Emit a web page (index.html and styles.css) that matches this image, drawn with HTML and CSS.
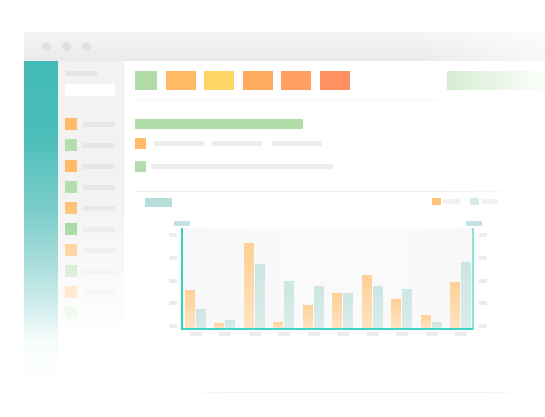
FILE: index.html
```html
<!DOCTYPE html>
<html lang="en">
<head>
<meta charset="utf-8">
<title>Dashboard</title>
<link rel="stylesheet" href="styles.css">
</head>
<body>
<div class="scene">
  <div class="window">
    <div class="titlebar">
      <span class="dot"></span><span class="dot"></span><span class="dot"></span>
    </div>
    <div class="body">
      <div class="nav"></div>
      <div class="sub">
        <div class="sub-label"></div>
        <div class="sub-input"></div>
        <ul class="menu">
          <li class="item"><span class="sq c-or"></span><span class="line"></span></li>
          <li class="item"><span class="sq c-gr"></span><span class="line"></span></li>
          <li class="item"><span class="sq c-or"></span><span class="line"></span></li>
          <li class="item"><span class="sq c-gr"></span><span class="line"></span></li>
          <li class="item"><span class="sq c-or"></span><span class="line"></span></li>
          <li class="item"><span class="sq c-dg"></span><span class="line"></span></li>
          <li class="item"><span class="sq c-or"></span><span class="line"></span></li>
          <li class="item"><span class="sq c-gr"></span><span class="line"></span></li>
          <li class="item"><span class="sq c-or"></span><span class="line"></span></li>
          <li class="item"><span class="sq c-gr"></span><span class="line"></span></li>
        </ul>
      </div>
      <div class="main">
        <div class="toolbar">
          <span class="tile t-green"></span>
          <span class="tile t-orange"></span>
          <span class="tile t-yellow"></span>
          <span class="tile t-orange2"></span>
          <span class="tile t-orange3"></span>
          <span class="tile t-orange4"></span>
          <span class="search"></span>
        </div>
        <div class="rule rule-top"></div>
        <div class="headline"></div>
        <div class="row row-a">
          <span class="sq c-or"></span>
          <span class="ph ph-a"></span><span class="ph ph-a"></span><span class="ph ph-a"></span>
        </div>
        <div class="row row-b">
          <span class="sq c-gr"></span>
          <span class="ph ph-b"></span>
        </div>
        <div class="rule rule-mid"></div>
        <div class="chart-head">
          <span class="chip"></span>
          <div class="legend">
            <span class="lg-sq lg-or"></span><span class="lg-tx"></span>
            <span class="lg-sq lg-te"></span><span class="lg-tx"></span>
          </div>
        </div>
        <div class="chart">
          <div class="axis-titles"><span class="at"></span><span class="at"></span></div>
          <div class="chart-grid">
            <div class="yaxis yaxis-left">
              <span class="tick"></span><span class="tick"></span><span class="tick"></span><span class="tick"></span><span class="tick"></span>
            </div>
            <div class="plot">
              <div class="group"><span class="bar bo" style="height:38%"></span><span class="bar bt" style="height:19%"></span></div>
              <div class="group"><span class="bar bo" style="height:5%"></span><span class="bar bt" style="height:8%"></span></div>
              <div class="group"><span class="bar bo" style="height:85%"></span><span class="bar bt" style="height:64%"></span></div>
              <div class="group"><span class="bar bo" style="height:6%"></span><span class="bar bt" style="height:47%"></span></div>
              <div class="group"><span class="bar bo" style="height:23%"></span><span class="bar bt" style="height:42%"></span></div>
              <div class="group"><span class="bar bo" style="height:35%"></span><span class="bar bt" style="height:35%"></span></div>
              <div class="group"><span class="bar bo" style="height:53%"></span><span class="bar bt" style="height:42%"></span></div>
              <div class="group"><span class="bar bo" style="height:29%"></span><span class="bar bt" style="height:39%"></span></div>
              <div class="group"><span class="bar bo" style="height:13%"></span><span class="bar bt" style="height:6%"></span></div>
              <div class="group"><span class="bar bo" style="height:46%"></span><span class="bar bt" style="height:66%"></span></div>
            </div>
            <div class="yaxis yaxis-right">
              <span class="tick"></span><span class="tick"></span><span class="tick"></span><span class="tick"></span><span class="tick"></span>
            </div>
          </div>
          <div class="xaxis">
            <span class="xl"><i></i></span><span class="xl"><i></i></span><span class="xl"><i></i></span><span class="xl"><i></i></span><span class="xl"><i></i></span>
            <span class="xl"><i></i></span><span class="xl"><i></i></span><span class="xl"><i></i></span><span class="xl"><i></i></span><span class="xl"><i></i></span>
          </div>
        </div>
        <div class="foot-rule"></div>
      </div>
    </div>
  </div>
</div>
</body>
</html>
```
FILE: styles.css
```css
html, body {
  margin: 0;
  padding: 0;
  background: #fff;
  width: 545px;
  height: 417px;
  overflow: hidden;
  font-family: "Liberation Sans", Arial, sans-serif;
}

.scene {
  padding: 32px 0 0 24px;
}

.window {
  width: 540px;
  display: flex;
  flex-direction: column;
}

.titlebar {
  height: 29px;
  display: flex;
  align-items: center;
  gap: 11px;
  padding-left: 18px;
  background:
    linear-gradient(to right, rgba(255,255,255,0) 72%, rgba(255,255,255,0.75) 100%),
    linear-gradient(#f5f5f5, #eaeaea);
}

.dot {
  width: 9px;
  height: 9px;
  border-radius: 50%;
  background: #e0e0e0;
}

.body {
  display: flex;
  height: 356px;
}

.nav {
  width: 34px;
  flex: none;
  background: linear-gradient(to bottom,
    #43bbb7 0px, #48bdb9 70px, #7ccdca 150px, #a6dcda 200px,
    #d6f0ef 250px, #f6fcfc 280px, #ffffff 320px);
}

.sub {
  width: 66px;
  flex: none;
  background: #f2f2f2;
  border-right: 1px solid #ececec;
  padding: 10px 0 0 7px;
  box-sizing: border-box;
  -webkit-mask-image: linear-gradient(to bottom, #000 36%, transparent 78%);
  mask-image: linear-gradient(to bottom, #000 36%, transparent 78%);
}

.sub-label {
  width: 31px;
  height: 5px;
  margin-left: 1px;
  background: #e4e4e4;
}

.sub-input {
  width: 50px;
  height: 12px;
  margin-top: 8px;
  background: #fff;
}

.menu {
  list-style: none;
  margin: 22px 0 0 0;
  padding: 0;
  display: flex;
  flex-direction: column;
  gap: 9px;
}

.item {
  display: flex;
  align-items: center;
  height: 12px;
  gap: 6px;
}

.item .sq {
  width: 12px;
  height: 12px;
  flex: none;
}

.line {
  width: 32px;
  height: 5px;
  background: #e6e6e6;
}

.sq { display: block; }
.c-or { background: #ffbb68; }
.c-gr { background: #b3ddac; }
.c-dg { background: #8fcf86; }

.main {
  flex: 1;
  padding: 10px 0 0 11px;
  display: flex;
  flex-direction: column;
  background: #fff;
}

.toolbar {
  display: flex;
  height: 19px;
  gap: 8.6px;
}

.tile {
  width: 30px;
  height: 19px;
}
.t-green { width: 22px; background: #b1dca9; }
.t-yellow { background: #fed466; }
.t-orange { background: #ffba63; }
.t-orange2 { background: #ffab5e; }
.t-orange3 { background: #ff9f61; }
.t-orange4 { background: #ff9062; }

.search {
  width: 110px;
  height: 19px;
  margin-left: 88px;
  background: linear-gradient(to right, #d5ecd1, #eef8ec 55%, #ffffff 100%);
}

.rule {
  height: 1px;
}
.rule-top {
  margin-top: 9px;
  width: 370px;
  background: linear-gradient(to right, #f4f4f4 70%, rgba(244,244,244,0));
}
.rule-mid {
  margin-top: 19px;
  width: 400px;
  background: linear-gradient(to right, #ececec 75%, rgba(236,236,236,0));
}

.headline {
  margin-top: 19px;
  width: 168px;
  height: 10px;
  background: #b0dca8;
}

.row {
  display: flex;
  align-items: center;
}
.row .sq {
  width: 11px;
  height: 11px;
  flex: none;
}
.row-a { margin-top: 9px; }
.row-b { margin-top: 12px; }

.ph {
  height: 5px;
  background: #ededed;
}
.ph-a { width: 50px; margin-left: 8px; }
.ph-a + .ph-a { margin-left: 8px; }
.row-a .ph-a:nth-child(4) { margin-left: 10px; }
.ph-b { width: 182px; margin-left: 5px; }

.chart-head {
  display: flex;
  align-items: flex-start;
  margin-top: 6px;
}

.chip {
  width: 27px;
  height: 9px;
  margin-left: 10px;
  background: #b7dedb;
}

.legend {
  display: flex;
  align-items: center;
  margin-left: 260px;
  height: 7px;
}
.lg-sq {
  width: 9px;
  height: 7px;
}
.lg-or { background: #ffc47a; }
.lg-te { background: #d6ebe9; margin-left: 10px; }
.lg-tx {
  width: 17px;
  height: 5px;
  margin-left: 2px;
  background: #f1f1f1;
}
.lg-te + .lg-tx { margin-left: 3px; width: 16px; }

.chart {
  margin-left: 34px;
  width: 321px;
  margin-top: 14px;
}

.axis-titles {
  display: flex;
  justify-content: space-between;
  padding: 0 8px 0 5px;
  height: 5px;
}
.at {
  width: 16px;
  height: 5px;
  background: #c3e3e0;
}

.chart-grid {
  display: flex;
  margin-top: 2px;
}

.yaxis {
  width: 12px;
  height: 100px;
  display: flex;
  flex-direction: column;
  justify-content: space-between;
  padding-top: 5px;
  box-sizing: border-box;
}
.yaxis-right {
  width: 16px;
  padding-left: 5px;
}
.tick {
  width: 8px;
  height: 4px;
  background: #ececec;
}

.plot {
  width: 290px;
  height: 100px;
  box-sizing: content-box;
  border-left: 2px solid #2fd4bd;
  border-right: 2px solid #8ee3d8;
  border-bottom: 2px solid #3ad6c2;
  background: linear-gradient(to right, #f8f8f8, #fafafa 60%, #f8f8f8);
  display: flex;
  align-items: flex-end;
  gap: 8.5px;
  padding-left: 2px;
}

.group {
  display: flex;
  align-items: flex-end;
  gap: 1px;
  width: 21px;
  height: 100%;
}

.bar {
  width: 10px;
  display: block;
}
.bo { background: linear-gradient(to bottom, #ffd095, #ffe3c2); }
.bt { background: linear-gradient(to bottom, #cde6e3, #d9ecea); }

.xaxis {
  display: flex;
  gap: 8.5px;
  padding-left: 16px;
  margin-top: 2px;
}
.xl {
  width: 21px;
  display: flex;
  justify-content: center;
}
.xl i {
  display: block;
  width: 12px;
  height: 4px;
  background: #ececec;
}

.foot-rule {
  margin-top: 56px;
  margin-left: 48px;
  width: 345px;
  height: 1px;
  background: linear-gradient(to right, rgba(238,238,238,0), #efefef 15%, #efefef 85%, rgba(238,238,238,0));
}
```
